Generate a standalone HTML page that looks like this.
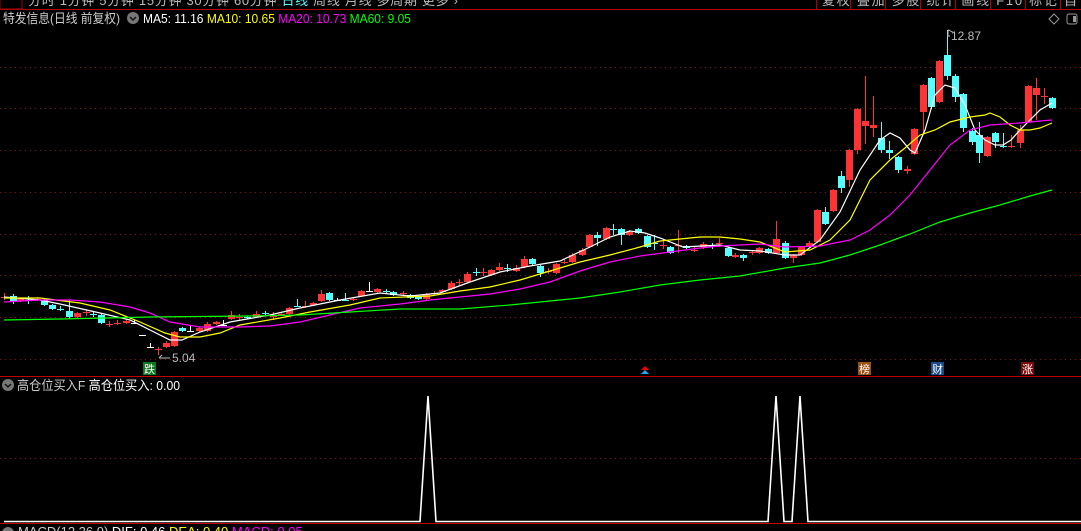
<!DOCTYPE html>
<html><head><meta charset="utf-8"><style>
body{margin:0;background:#000;width:1081px;height:531px;overflow:hidden;font-family:"Liberation Sans","Noto Sans CJK SC",sans-serif;}
svg{position:absolute;left:0;top:0}
text{font-family:"Liberation Sans","Noto Sans CJK SC",sans-serif}
</style></head><body>
<svg id="s" width="1081" height="531" xmlns="http://www.w3.org/2000/svg">
<rect width="1081" height="531" fill="#000"/>
<g id="grid" stroke="#8a1010" stroke-width="1" stroke-dasharray="1,4"></g>
<line x1="0" y1="9.5" x2="1081" y2="9.5" stroke="#b00000"/>
<rect x="0" y="-6" width="22" height="15" fill="none" stroke="#b00000"/>
<text x="28" y="5" fill="#bbb" font-size="13" textLength="430" lengthAdjust="spacing">分时 1分钟 5分钟 15分钟 30分钟 60分钟 <tspan fill="#5ff">日线</tspan> 周线 月线 多周期 更多 ›</text>
<g stroke="#b00000"><line x1="816.5" y1="0" x2="816.5" y2="9"/><line x1="850.5" y1="0" x2="850.5" y2="9"/><line x1="885.5" y1="0" x2="885.5" y2="9"/><line x1="920.5" y1="0" x2="920.5" y2="9"/><line x1="955.5" y1="0" x2="955.5" y2="9"/><line x1="990.5" y1="0" x2="990.5" y2="9"/><line x1="1025.5" y1="0" x2="1025.5" y2="9"/><line x1="1060.5" y1="0" x2="1060.5" y2="9"/></g>
<text x="822" y="5" fill="#bbb" font-size="13" textLength="255" lengthAdjust="spacing">复权 叠加 多股 统计 画线 F10 标记 自</text>
<text x="3" y="23" fill="#ccc" font-size="13" textLength="117" lengthAdjust="spacingAndGlyphs">特发信息(日线 前复权)</text>
<circle cx="133" cy="18" r="6" fill="#777"/><path d="M130 17l3 3 3-3" stroke="#111" stroke-width="1.5" fill="none"/>
<text x="143" y="23" font-size="12.5" textLength="268" lengthAdjust="spacingAndGlyphs"><tspan fill="#fff">MA5: 11.16</tspan> <tspan fill="#ff0">MA10: 10.65</tspan> <tspan fill="#f0f">MA20: 10.73</tspan> <tspan fill="#0f0">MA60: 9.05</tspan></text>
<path d="M1054 14l5 5-5 5-5-5z" stroke="#999" fill="none"/>
<rect x="1067" y="14" width="10" height="10" rx="2" stroke="#999" fill="none"/><rect x="1073" y="16" width="3" height="6" fill="#999"/>
<g id="c"></g>
<g id="ma" fill="none" stroke-width="1.2"></g>
<text x="951" y="40" fill="#bbb" font-size="12">12.87</text><path d="M947 36h3M948 30v6M948 30c2 0 3 2 5 2" stroke="#bbb" fill="none"/>
<text x="172" y="362" fill="#bbb" font-size="12">5.04</text><path d="M159 358h11M159 358l3-3" stroke="#bbb" fill="none"/>
<rect x="143" y="362" width="13" height="13" fill="#0a7a1a"/><text x="144" y="373" fill="#fff" font-size="11">跌</text>
<rect x="858" y="362" width="13" height="13" fill="#9a4f10"/><text x="859" y="373" fill="#fff" font-size="11">榜</text>
<rect x="931" y="362" width="13" height="13" fill="#1a4a8a"/><text x="932" y="373" fill="#fff" font-size="11">财</text>
<rect x="1021" y="362" width="13" height="13" fill="#7a0a0a"/><text x="1022" y="373" fill="#fff" font-size="11">涨</text>
<path d="M645 366l4 4h-8z" fill="#e00"/><path d="M645 370l4 4h-8z" fill="#2af"/>
<line x1="0" y1="376.5" x2="1081" y2="376.5" stroke="#c00000"/>
<circle cx="8" cy="385" r="6" fill="#777"/><path d="M5 384l3 3 3-3" stroke="#111" stroke-width="1.5" fill="none"/>
<text x="17" y="390" fill="#ccc" font-size="13" textLength="163" lengthAdjust="spacingAndGlyphs">高仓位买入F <tspan fill="#fff">高仓位买入: 0.00</tspan></text>
<path d="M4 521.5H420L428 396L436 521.5H768L776 396L784 521.5H792L800 396L808 521.5H1081" stroke="#fff" stroke-width="1.6" fill="none"/>
<line x1="0" y1="523.5" x2="1081" y2="523.5" stroke="#c00000"/>
<circle cx="8" cy="533" r="6" fill="#777"/>
<text x="18" y="536" fill="#ccc" font-size="13">MACD(12,26,9) <tspan fill="#fff">DIF: 0.46</tspan> <tspan fill="#ff0">DEA: 0.40</tspan> <tspan fill="#f0f">MACD: 0.05</tspan></text>
</svg>
<script>
var N="http://www.w3.org/2000/svg";
function el(p,t,a){var e=document.createElementNS(N,t);for(var k in a)e.setAttribute(k,a[k]);p.appendChild(e);return e;}
var g=document.getElementById('grid');
[67,108,150,192,234,275,317,359,458].forEach(function(y){el(g,'line',{x1:0,y1:y+.5,x2:1081,y2:y+.5});});
var C=[[4,'r',297,298,293,300],[13,'c',296,301,294,304],[20,'r',299,301,298,302],[28,'c',300,300,296,304],[37,'r',299,300,297,301],[44,'c',300,305,299,306],[52,'c',305,309,304,310],[60,'c',309,309,306,311],[69,'c',311,317,300,319],[77,'r',313,317,312,318],[86,'r',312,312,309,316],[93,'c',314,314,311,317],[101,'c',315,323,314,324],[109,'r',324,324,321,327],[117,'r',323,323,320,325],[126,'r',321,323,319,324],[134,'w',323,323,320,324],[142,'w',335,335,335,336],[150,'w',347,347,343,348],[158,'r',349,349,347,355],[166,'r',343,347,341,348],[174,'r',332,346,331,347],[182,'c',328,331,327,332],[190,'w',331,331,326,332],[199,'r',328,331,327,332],[207,'r',324,331,322,332],[216,'r',322,324,321,325],[223,'w',325,325,320,326],[231,'r',315,319,311,320],[239,'r',317,317,314,320],[247,'c',317,318,316,319],[256,'r',314,317,311,318],[265,'c',313,313,311,315],[273,'r',316,316,312,320],[281,'r',314,315,313,316],[289,'r',308,314,307,315],[297,'c',306,306,299,307],[305,'r',306,306,301,308],[313,'r',303,305,302,306],[321,'r',294,301,290,302],[329,'c',293,300,292,301],[337,'w',300,300,298,301],[345,'c',300,300,293,301],[353,'r',299,299,297,301],[361,'r',291,296,290,297],[369,'w',291,291,282,292],[377,'r',289,292,288,293],[386,'c',291,291,289,293],[393,'c',292,295,291,296],[403,'r',293,293,291,295],[410,'c',295,298,294,299],[418,'c',297,299,296,300],[426,'r',294,299,293,300],[434,'r',293,293,291,295],[442,'r',290,292,289,293],[451,'r',283,289,281,290],[459,'r',282,282,279,285],[467,'r',274,282,272,283],[476,'c',272,272,268,276],[483,'r',272,272,268,276],[491,'r',270,275,269,276],[499,'r',267,270,263,271],[507,'c',268,268,264,272],[516,'r',268,271,265,272],[524,'r',259,267,256,268],[532,'c',259,264,258,265],[540,'c',266,273,265,277],[548,'r',271,271,268,274],[556,'r',264,273,263,274],[564,'r',262,262,259,264],[572,'r',255,262,253,263],[582,'r',250,255,248,256],[589,'r',235,247,234,248],[597,'c',235,238,232,246],[606,'r',228,239,227,240],[613,'c',229,229,224,235],[621,'c',229,235,228,245],[629,'r',232,235,230,236],[638,'c',229,233,228,234],[647,'c',236,247,235,248],[654,'c',243,243,235,250],[663,'r',245,245,241,249],[670,'c',247,253,246,254],[678,'r',245,245,230,253],[686,'c',246,248,245,249],[694,'r',250,250,247,252],[703,'r',244,247,242,249],[712,'c',246,246,243,249],[719,'r',243,243,238,247],[728,'c',248,256,247,257],[735,'r',255,257,253,258],[743,'c',255,258,254,261],[752,'r',252,253,250,255],[759,'r',248,253,247,254],[768,'c',249,253,248,254],[776,'r',239,253,221,254],[785,'c',243,258,241,259],[793,'r',255,258,254,263],[801,'r',247,255,246,256],[809,'r',243,246,241,247],[817,'r',210,242,209,243],[825,'c',212,224,207,225],[833,'r',190,211,189,212],[841,'c',176,188,171,193],[849,'r',150,180,149,187],[857,'r',109,150,108,154],[865,'r',121,126,76,144],[873,'r',125,128,96,137],[881,'c',138,150,122,153],[889,'c',150,153,141,159],[898,'c',157,170,156,173],[907,'r',169,171,166,174],[914,'r',129,154,128,155],[923,'r',85,112,84,133],[931,'c',78,107,77,109],[939,'r',61,102,60,103],[947,'c',55,76,30,80],[955,'c',76,97,74,102],[963,'c',94,128,93,132],[972,'c',131,142,128,145],[979,'c',135,153,122,163],[987,'r',137,156,136,157],[995,'c',133,142,132,148],[1003,'c',146,146,133,148],[1011,'r',146,147,135,148],[1020,'r',130,143,125,148],[1028,'r',86,122,85,123],[1036,'r',88,95,78,120],[1044,'r',96,96,88,104],[1052,'c',98,108,97,109]];
var cg=document.getElementById('c');
C.forEach(function(d){var col=d[1]=='r'?'#ff3333':d[1]=='c'?'#55ffff':'#ffffff';
el(cg,'line',{x1:d[0]+.5,y1:d[4],x2:d[0]+.5,y2:d[5],stroke:col});
var h=Math.max(1,d[3]-d[2]);el(cg,'rect',{x:d[0]-3,y:d[2],width:7,height:h,fill:col});});
var M={'#ffffff':[[4,297],[40,300],[60,304],[100,313],[130,320],[150,330],[170,340],[182,340],[200,332],[230,322],[270,315],[300,308],[340,300],[380,293],[410,296],[440,293],[470,282],[500,272],[530,266],[560,261],[590,247],[610,237],[630,231],[645,233],[660,238],[683,247],[720,245],[740,250],[760,251],[785,255],[800,255],[820,240],[840,212],[860,170],[880,140],[890,133],[900,138],[910,150],[915,153],[925,130],[935,95],[945,85],[955,88],[965,105],[975,130],[985,140],[995,145],[1003,145],[1011,140],[1020,130],[1030,120],[1040,110],[1052,103]],
'#ffff00':[[4,298],[40,298],[80,303],[110,310],[140,322],[165,333],[180,337],[200,337],[220,333],[240,325],[280,318],[310,312],[350,305],[380,298],[430,296],[460,291],[490,287],[520,280],[550,271],[580,262],[610,255],[640,247],[660,241],[680,239],[700,237],[720,237],[740,239],[760,242],[785,252],[810,250],[830,240],[850,220],[870,180],[890,160],[905,148],[920,135],[935,130],[950,122],[970,117],[985,115],[990,113],[1000,117],[1010,125],[1020,130],[1030,130],[1040,128],[1052,123]],
'#ff00ff':[[4,302],[40,300],[70,300],[100,302],[130,307],[150,313],[170,322],[200,327],[240,327],[270,326],[300,322],[330,315],[360,308],[400,304],[430,300],[460,297],[490,294],[520,289],[550,282],[580,271],[610,262],[640,256],[670,252],[700,248],[720,246],[760,244],[785,247],[820,246],[850,240],[870,230],[890,215],[910,195],[930,170],[950,145],[970,130],[990,125],[1020,123],[1040,121],[1052,120]],
'#00ff00':[[4,320],[60,319],[150,317],[250,316],[300,315],[350,312],[400,309],[460,309],[510,305],[540,302],[580,298],[620,292],[660,285],[700,280],[740,276],[785,268],[820,263],[850,255],[880,245],[910,234],[940,222],[970,213],[1000,205],[1030,196],[1052,190]]};
var mg=document.getElementById('ma');
for(var k in M){el(mg,'polyline',{points:M[k].map(function(p){return p.join(',')}).join(' '),stroke:k});}
</script>
</body></html>
